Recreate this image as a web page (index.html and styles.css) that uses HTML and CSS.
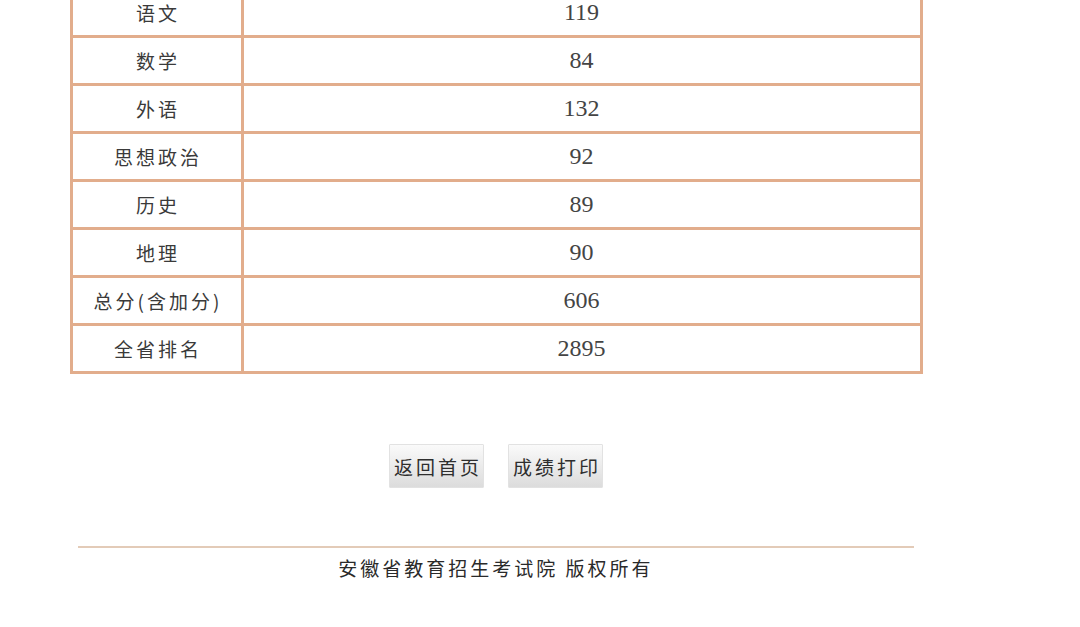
FILE: index.html
```html
<!DOCTYPE html>
<html lang="zh-CN">
<head>
<meta charset="utf-8">
<title>成绩查询</title>
<link rel="stylesheet" href="styles.css">
</head>
<body>
<div class="page">
  <table class="score">
    <tr><td class="label">语文</td><td class="value">119</td></tr>
    <tr><td class="label">数学</td><td class="value">84</td></tr>
    <tr><td class="label">外语</td><td class="value">132</td></tr>
    <tr><td class="label">思想政治</td><td class="value">92</td></tr>
    <tr><td class="label">历史</td><td class="value">89</td></tr>
    <tr><td class="label">地理</td><td class="value">90</td></tr>
    <tr><td class="label">总分(含加分)</td><td class="value">606</td></tr>
    <tr><td class="label">全省排名</td><td class="value">2895</td></tr>
  </table>
  <div class="actions">
    <button class="btn" type="button">返回首页</button>
    <button class="btn" type="button">成绩打印</button>
  </div>
  <div class="footer">
    <div class="rule"></div>
    <p class="copy">安徽省教育招生考试院 版权所有</p>
  </div>
</div>
</body>
</html>
```
FILE: styles.css
```css
html, body {
  margin: 0;
  padding: 0;
  background: #ffffff;
}
body {
  font-family: "Noto Sans CJK SC", "Noto Sans", sans-serif;
  color: #333;
  overflow: hidden;
}
.page {
  width: 992px;
  display: flex;
  flex-direction: column;
  align-items: center;
}
.score {
  width: 853px;
  margin-top: -13px;
  border-collapse: collapse;
  border: 3px solid #e2ad8c;
}
.score td {
  border: 3px solid #e2ad8c;
  padding: 0;
  height: 45px;
  line-height: 45px;
  text-align: center;
}
.label {
  width: 168px;
  font-size: 19px;
  letter-spacing: 3px;
  text-indent: 3px;
  color: #3a3a3a;
}
.value {
  font-family: "Liberation Serif", "Times New Roman", serif;
  font-size: 24px;
  color: #444;
}
.actions {
  display: flex;
  gap: 24px;
  margin-top: 70px;
}
.btn {
  width: 95px;
  height: 44px;
  padding: 0 0 0 3px;
  border: 1px solid #e2e2e2;
  border-radius: 1px;
  background: linear-gradient(#fafafa, #dcdcdc);
  font-family: "Noto Sans CJK SC", sans-serif;
  font-size: 19px;
  letter-spacing: 3px;
  color: #2e2e2e;
}
.footer {
  margin-top: 58px;
  display: flex;
  flex-direction: column;
  align-items: center;
}
.rule {
  width: 836px;
  height: 2px;
  background: #e3cbb8;
}
.copy {
  margin: 6px 0 0;
  font-size: 19px;
  letter-spacing: 3px;
  color: #2a2a2a;
  line-height: 28px;
}
```
